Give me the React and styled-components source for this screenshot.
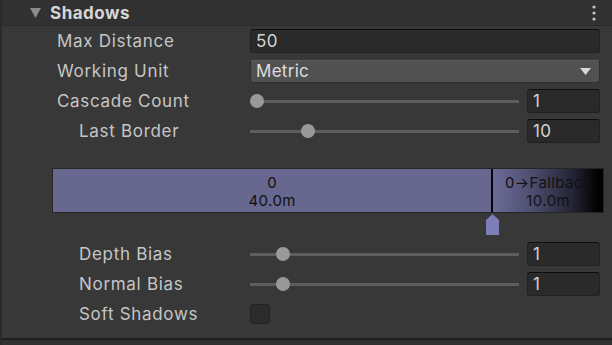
import React from "react";
import styled, { createGlobalStyle } from "styled-components";

const GlobalStyle = createGlobalStyle`
  html, body {
    margin: 0;
    padding: 0;
    background: #383838;
    font-family: Inter, "Noto Sans", "Liberation Sans", sans-serif;
  }
`;

const Panel = styled.div`
  width: 612px;
  height: 345px;
  background: #383838;
  border-left: 2px solid #2a2a2a;
  box-sizing: border-box;
  display: flex;
  flex-direction: column;
  overflow: hidden;
`;

const Header = styled.div`
  height: 25px;
  flex: 0 0 auto;
  background: #313131;
  border-bottom: 1px solid #2b2b2b;
  display: flex;
  align-items: center;
  padding: 0 16px 0 28px;
  gap: 9px;
`;

const Title = styled.div`
  flex: 1;
  color: #d6d6d6;
  font-weight: 700;
  font-size: 17px;
  letter-spacing: 0.5px;
`;

const Body = styled.div`
  flex: 1;
  display: flex;
  flex-direction: column;
  border-bottom: 2px solid #1f1f1f;
`;

const Footer = styled.div`
  height: 5px;
  background: #303030;
`;

const Row = styled.div`
  height: 30px;
  display: grid;
  grid-template-columns: 193px 1fr;
  align-items: center;
  padding: 0 12px 0 55px;
`;

const Label = styled.div`
  color: #c6c6c6;
  font-size: 17px;
  letter-spacing: 0.7px;
  white-space: nowrap;
  padding-left: ${(p) => (p.$indent ? "22px" : "0")};
`;

const TextField = styled.div`
  height: 24px;
  box-sizing: border-box;
  background: #2a2a2a;
  border: 1px solid #212121;
  border-top-color: #0e0e0e;
  border-radius: 3px;
  color: #d4d4d4;
  font-size: 17px;
  letter-spacing: 0.3px;
  display: flex;
  align-items: center;
  padding-left: 5px;
  width: ${(p) => p.$width || "auto"};
`;

const Dropdown = styled.div`
  height: 23px;
  box-sizing: border-box;
  background: #515151;
  border: 1px solid #303030;
  border-top-color: #5c5c5c;
  border-radius: 3px;
  color: #dedede;
  font-size: 17px;
  letter-spacing: 0.3px;
  display: flex;
  align-items: center;
  justify-content: space-between;
  padding: 0 8px 0 5px;
`;

const SliderWrap = styled.div`
  display: flex;
  align-items: center;
  gap: 8px;
`;

const Track = styled.div`
  flex: 1;
  position: relative;
  height: 14px;
  &::before {
    content: "";
    position: absolute;
    left: 0;
    right: 0;
    top: 6px;
    height: 3px;
    background: #5e5e5e;
  }
`;

const Knob = styled.div`
  position: absolute;
  top: 0;
  width: 14px;
  height: 14px;
  border-radius: 50%;
  background: #999999;
`;

const Checkbox = styled.div`
  width: 20px;
  height: 20px;
  box-sizing: border-box;
  background: #2b2b2b;
  border: 1px solid #222;
  border-radius: 3px;
`;

const CascadeBar = styled.div`
  margin: 22px 8px 0 50px;
  height: 45px;
  box-sizing: border-box;
  border: 1px solid #252525;
  display: flex;
`;

const Segment = styled.div`
  flex: ${(p) => p.$grow} 1 0;
  min-width: 0;
  background: ${(p) => p.$bg};
  display: flex;
  flex-direction: column;
  align-items: center;
  justify-content: center;
  padding-top: 2px;
  color: #111;
  font-size: 15px;
  line-height: 18px;
  letter-spacing: 0.4px;
  white-space: nowrap;
`;

const Fallback = styled(Segment)`
  border-left: 2px solid #050505;
`;

const HandleTrack = styled.div`
  position: relative;
  height: 26px;
  margin: 0 9px 0 51px;
`;

const Handle = styled.svg`
  position: absolute;
  top: 1px;
  margin-left: -7px;
`;

function Triangle() {
  return (
    <svg width="11" height="10" viewBox="0 0 11 10">
      <path d="M0 0 H11 L5.5 10 Z" fill="#8c8c8c" />
    </svg>
  );
}

function Kebab() {
  return (
    <svg width="4" height="16" viewBox="0 0 4 16">
      <circle cx="2" cy="2" r="1.6" fill="#c4c4c4" />
      <circle cx="2" cy="8" r="1.6" fill="#c4c4c4" />
      <circle cx="2" cy="14" r="1.6" fill="#c4c4c4" />
    </svg>
  );
}

function Slider({ pct, value }) {
  return (
    <SliderWrap>
      <Track>
        <Knob style={{ left: `calc(${pct} * (100% - 14px))` }} />
      </Track>
      <TextField $width="73px">{value}</TextField>
    </SliderWrap>
  );
}

export default function App() {
  const split = 0.8;
  return (
    <>
      <GlobalStyle />
      <Panel>
        <Header>
          <Triangle />
          <Title>Shadows</Title>
          <Kebab />
        </Header>
        <Body>
          <Row>
            <Label>Max Distance</Label>
            <TextField>50</TextField>
          </Row>
          <Row>
            <Label>Working Unit</Label>
            <Dropdown>
              Metric
              <svg width="11" height="7" viewBox="0 0 11 7">
                <path d="M0 0 H11 L5.5 7 Z" fill="#d8d8d8" />
              </svg>
            </Dropdown>
          </Row>
          <Row>
            <Label>Cascade Count</Label>
            <Slider pct={0} value="1" />
          </Row>
          <Row>
            <Label $indent>Last Border</Label>
            <Slider pct={0.2} value="10" />
          </Row>

          <CascadeBar>
            <Segment $grow={split} $bg="#676790">
              <span>0</span>
              <span>40.0m</span>
            </Segment>
            <Fallback
              $grow={1 - split}
              $bg="linear-gradient(to right, #6c6c99 0%, #4e4e70 35%, #242436 72%, #000 96%)"
            >
              <span>0→Fallback</span>
              <span>10.0m</span>
            </Fallback>
          </CascadeBar>
          <HandleTrack>
            <Handle
              width="13"
              height="21"
              viewBox="0 0 13 21"
              style={{ left: `${split * 100}%` }}
            >
              <path d="M6.5 0 L13 6 V21 H0 V6 Z" fill="#7e7eb6" />
            </Handle>
          </HandleTrack>

          <Row>
            <Label $indent>Depth Bias</Label>
            <Slider pct={0.1} value="1" />
          </Row>
          <Row>
            <Label $indent>Normal Bias</Label>
            <Slider pct={0.1} value="1" />
          </Row>
          <Row>
            <Label $indent>Soft Shadows</Label>
            <Checkbox />
          </Row>
        </Body>
        <Footer />
      </Panel>
    </>
  );
}
